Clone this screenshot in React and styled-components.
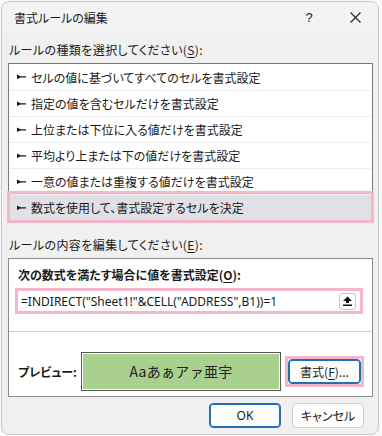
import React from "react";
import styled, { createGlobalStyle } from "styled-components";

const Global = createGlobalStyle`
  html, body { margin: 0; padding: 0; background: #f9f9f9; }
  body { font-family: "Noto Sans CJK JP", "Noto Sans", sans-serif; }
  * { box-sizing: border-box; }
`;

const Window = styled.div`
  margin: 1px 0 0 1px;
  width: 378px;
  height: 434px;
  background: #f0f0f0;
  border: 1px solid #c9c9c9;
  border-radius: 8px;
  overflow: hidden;
  display: flex;
  flex-direction: column;
  color: #1a1a1a;
  font-size: 12px;
  font-feature-settings: "palt";
`;

const TitleBar = styled.div`
  height: 30px;
  display: flex;
  align-items: center;
  padding-left: 12px;
  background: #f3f3f3;
`;

const Title = styled.div`
  flex: 1;
  font-size: 12px;
`;

const TitleButton = styled.div`
  width: 46px;
  height: 30px;
  display: flex;
  align-items: center;
  justify-content: center;
  font-family: "Liberation Sans", sans-serif;
  font-size: 13px;
`;

const Body = styled.div`
  display: flex;
  flex-direction: column;
  padding: 10px 5px 0 6px;
`;

const Label = styled.div`
  height: 16px;
  line-height: 16px;
  margin-bottom: ${(p) => p.$mb || 4}px;
  margin-top: ${(p) => p.$mt || 0}px;
  padding-left: 1px;
  letter-spacing: 0.4px;
`;

const U = styled.span`
  text-decoration: underline;
  text-underline-offset: 2px;
`;

const ListBox = styled.div`
  border: 1px solid #7a7a7a;
  background: #ffffff;
  display: flex;
  flex-direction: column;
  padding: 0 1px;
`;

const Item = styled.div`
  height: 26px;
  display: flex;
  align-items: center;
  gap: 5px;
  padding-left: 7px;
  border-top: ${(p) => (p.$first ? "none" : "1px solid #ececec")};
  background: ${(p) => (p.$selected ? "#e0e0e6" : "#ffffff")};
  outline: ${(p) => (p.$selected ? "3px solid #f5b6cb" : "none")};
  margin-bottom: ${(p) => (p.$selected ? "1px" : "0")};
`;

const Arrow = () => (
  <svg width="9" height="6" viewBox="0 0 9 6">
    <polygon points="0,0.5 3.5,2.2 9,2.2 9,3.4 3.5,3.4 0,5" fill="#1a1a1a" />
  </svg>
);

const Panel = styled.div`
  border: 1px solid #8a8a8a;
  background: #ffffff;
  height: 139px;
  display: flex;
  flex-direction: column;
`;

const PanelTop = styled.div`
  padding: 8px 9px 0 6px;
  height: 73px;
  border-bottom: 1px solid #d0d0d0;
`;

const BoldLabel = styled.div`
  font-weight: bold;
  padding-left: 3px;
  height: 16px;
  line-height: 16px;
  margin-bottom: 5px;
`;

const FormulaBox = styled.div`
  border: 3px solid #f5b6cb;
  height: 26px;
  display: flex;
  align-items: center;
  padding: 0 4px 0 3px;
`;

const FormulaText = styled.div`
  flex: 1;
  font-family: "Noto Sans", sans-serif;
  font-size: 12px;
  white-space: nowrap;
`;

const CollapseBtn = styled.div`
  width: 17px;
  height: 17px;
  border: 1px solid #c8c8c8;
  border-radius: 3px;
  background: #fdfdfd;
  display: flex;
  align-items: center;
  justify-content: center;
`;

const PreviewRow = styled.div`
  flex: 1;
  display: flex;
  align-items: center;
  padding: 14px 5px 0 9px;
`;

const PreviewLabel = styled.div`
  font-weight: bold;
  width: 63px;
`;

const PreviewBox = styled.div`
  width: 200px;
  height: 39px;
  border: 1px solid #555;
  padding: 1px;
  display: flex;
`;

const PreviewFill = styled.div`
  flex: 1;
  background: #a9d08e;
  display: flex;
  align-items: center;
  justify-content: center;
  font-size: 14px;
  font-feature-settings: normal;
  letter-spacing: 0.3px;
  color: #222;
`;

const Highlight = styled.div`
  margin-left: 4px;
  border: 3px solid #f5b6cb;
  display: flex;
`;

const Button = styled.div`
  width: ${(p) => p.$w || 72}px;
  height: ${(p) => p.$h || 25}px;
  border: 1px solid ${(p) => (p.$primary ? "#1f6fb5" : "#cfcfcf")};
  border-radius: 4px;
  background: #fdfdfd;
  display: flex;
  align-items: center;
  justify-content: center;
  font-family: ${(p) => (p.$latin ? '"Noto Sans", sans-serif' : '"Noto Sans CJK JP", sans-serif')};
  box-shadow: ${(p) => (p.$primary ? "inset 0 0 0 1px #1f6fb5" : "none")};
`;

const Footer = styled.div`
  display: flex;
  justify-content: flex-end;
  gap: 11px;
  padding: 6px 9px 0 0;
`;

const rules = [
  "セルの値に基づいてすべてのセルを書式設定",
  "指定の値を含むセルだけを書式設定",
  "上位または下位に入る値だけを書式設定",
  "平均より上または下の値だけを書式設定",
  "一意の値または重複する値だけを書式設定",
  "数式を使用して、書式設定するセルを決定",
];

export default function App() {
  return (
    <>
      <Global />
      <Window>
        <TitleBar>
          <Title>書式ルールの編集</Title>
          <TitleButton>?</TitleButton>
          <TitleButton>
            <svg width="11" height="11" viewBox="0 0 11 11">
              <path d="M0.5 0.5 L10.5 10.5 M10.5 0.5 L0.5 10.5" stroke="#222" strokeWidth="1.1" />
            </svg>
          </TitleButton>
        </TitleBar>
        <Body>
          <Label $mb={5}>
            ルールの種類を選択してください(<U>S</U>):
          </Label>
          <ListBox>
            {rules.map((r, i) => (
              <Item key={r} $first={i === 0} $selected={i === rules.length - 1}>
                <Arrow />
                {r}
              </Item>
            ))}
          </ListBox>
          <Label $mt={15} $mb={5}>
            ルールの内容を編集してください(<U>E</U>):
          </Label>
          <Panel>
            <PanelTop>
              <BoldLabel>
                次の数式を満たす場合に値を書式設定(<U>O</U>):
              </BoldLabel>
              <FormulaBox>
                <FormulaText>=INDIRECT("Sheet1!"&amp;CELL("ADDRESS",B1))=1</FormulaText>
                <CollapseBtn>
                  <svg width="9" height="10" viewBox="0 0 9 10">
                    <polygon points="4.5,0.5 9,5 6,5 6,7 3,7 3,5 0,5" fill="#111" />
                    <rect x="0" y="8.5" width="9" height="1.5" fill="#111" />
                  </svg>
                </CollapseBtn>
              </FormulaBox>
            </PanelTop>
            <PreviewRow>
              <PreviewLabel>プレビュー:</PreviewLabel>
              <PreviewBox>
                <PreviewFill>Aaあぁアァ亜宇</PreviewFill>
              </PreviewBox>
              <Highlight>
                <Button $w={73} $h={25} $primary>
                  書式(<U>F</U>)...
                </Button>
              </Highlight>
            </PreviewRow>
          </Panel>
          <Footer>
            <Button $primary $latin>OK</Button>
            <Button>キャンセル</Button>
          </Footer>
        </Body>
      </Window>
    </>
  );
}
